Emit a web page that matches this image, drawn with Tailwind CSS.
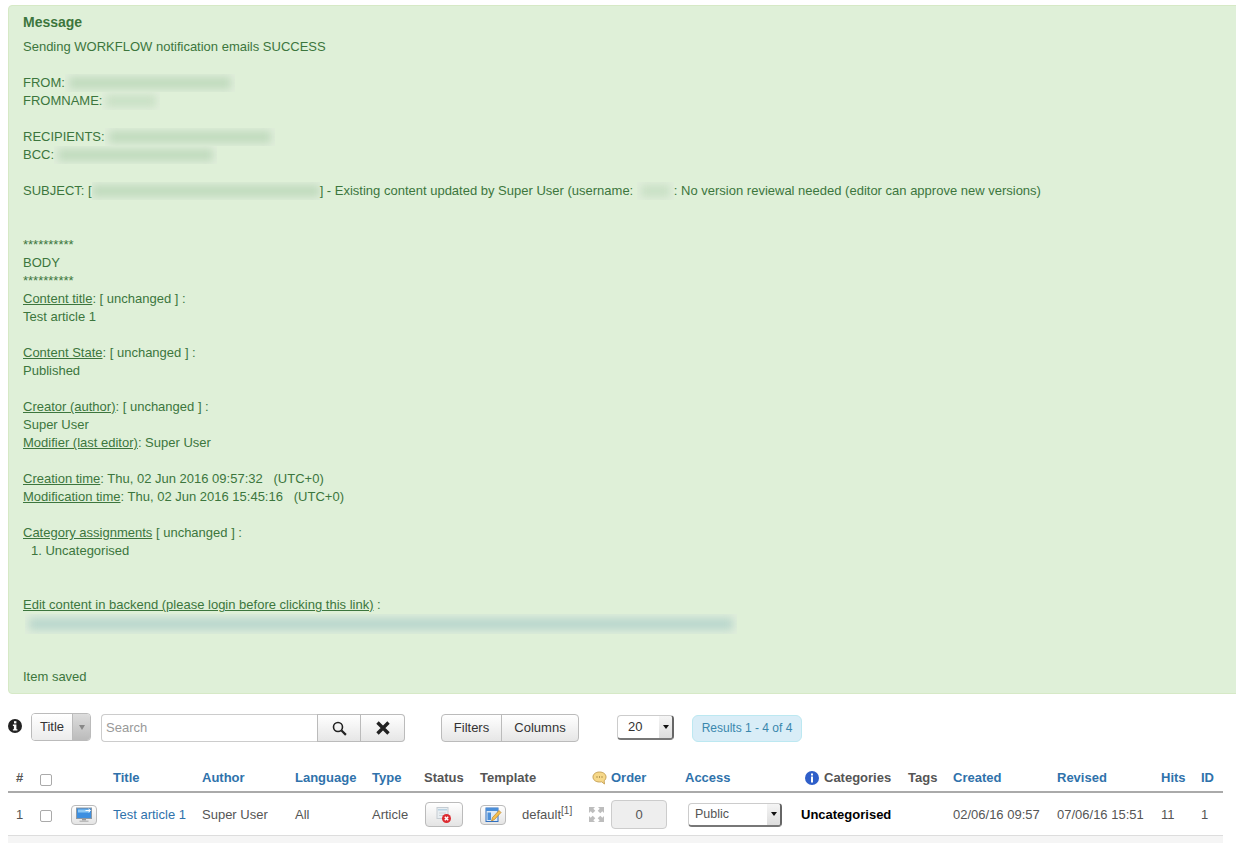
<!DOCTYPE html>
<html lang="en">
<head>
  <meta charset="UTF-8">
  <title>Content manager</title>
  <script src="https://cdn.jsdelivr.net/npm/@tailwindcss/browser@4"></script>
</head>
<body class="bg-white h-[843px] overflow-hidden font-['Liberation_Sans',Arial,sans-serif] text-[13px] leading-[18px] text-[#555]">
  <!-- Message -->
  <div class="mt-[5px] ml-2 -mr-2 h-[689px] pt-[7px] pl-[14px] bg-[#dff0d8] border border-[#d6e9c6] rounded text-[#3c763d]">
    <h4 class="font-bold text-[14px] h-[18px] mb-[7px]">Message</h4>
    <div>Sending WORKFLOW notification emails SUCCESS</div>
    <div class="h-[18px]"></div>
    <div class="flex h-[18px]">FROM:<span class="w-[170px] h-[18px] overflow-hidden bg-[#e0eedb]"><span class="block mx-1 mt-[3px] h-[12px] bg-[#bfdabc] blur-[4px]"></span></span></div>
    <div class="flex h-[18px]">FROMNAME:<span class="w-[58px] h-[18px] overflow-hidden bg-[#e0eedb]"><span class="block mx-1 mt-[3px] h-[12px] bg-[#c8e0c4] blur-[4px]"></span></span></div>
    <div class="h-[18px]"></div>
    <div class="flex h-[18px]">RECIPIENTS:<span class="w-[170px] h-[18px] overflow-hidden bg-[#e0eedb]"><span class="block mx-1 mt-[3px] h-[12px] bg-[#bfdabc] blur-[4px]"></span></span></div>
    <div class="flex h-[18px]">BCC:<span class="w-[163px] h-[18px] overflow-hidden bg-[#e0eedb]"><span class="block mx-1 mt-[3px] h-[12px] bg-[#bfdabc] blur-[4px]"></span></span></div>
    <div class="h-[18px]"></div>
    <div class="flex whitespace-pre">SUBJECT: [<span class="w-[228px] h-[18px] overflow-hidden bg-[#e0eedb]"><span class="block mx-0 mt-[3px] h-[12px] bg-[#bfdabc] blur-[4px]"></span></span>] - Existing content updated by Super User (username: <span class="w-[37px] h-[18px] overflow-hidden bg-[#e0eedb]"><span class="block mx-1 mt-[3px] h-[12px] bg-[#c8e0c4] blur-[4px]"></span></span>: No version reviewal needed (editor can approve new versions)</div>
    <div class="h-[36px]"></div>
    <div>**********</div>
    <div>BODY</div>
    <div>**********</div>
    <div><u>Content title</u>: [ unchanged ] :</div>
    <div>Test article 1</div>
    <div class="h-[18px]"></div>
    <div><u>Content State</u>: [ unchanged ] :</div>
    <div>Published</div>
    <div class="h-[18px]"></div>
    <div><u>Creator (author)</u>: [ unchanged ] :</div>
    <div>Super User</div>
    <div><u>Modifier (last editor)</u>: Super User</div>
    <div class="h-[18px]"></div>
    <div class="whitespace-pre"><u>Creation time</u>: Thu, 02 Jun 2016 09:57:32   (UTC+0)</div>
    <div class="whitespace-pre"><u>Modification time</u>: Thu, 02 Jun 2016 15:45:16   (UTC+0)</div>
    <div class="h-[18px]"></div>
    <div><u>Category assignments</u> [ unchanged ] :</div>
    <div class="pl-2">1. Uncategorised</div>
    <div class="h-[36px]"></div>
    <div><u>Edit content in backend (please login before clicking this link)</u> :</div>
    <div class="ml-[2px] w-[712px] h-[20px] overflow-hidden bg-[#e0eedb]"><span class="block mx-1 mt-[4px] h-[12px] bg-[#b8d6cc] blur-[4px]"></span></div>
    <div class="h-[34px]"></div>
    <div>Item saved</div>
  </div>

  <!-- Toolbar -->
  <div class="flex items-start mt-[19px] ml-2 text-[#333]">
    <svg class="w-[14px] h-[14px] mt-[6px] mr-[9px]" viewBox="0 0 14 14"><circle cx="7" cy="7" r="7" fill="#222"/><rect x="6" y="2.200" width="2.400" height="2.200" fill="#fff"/><path d="M4.900 5.600h3.500v4.600h1v1.300H4.900v-1.300h1V6.900h-1z" fill="#fff"/></svg>
    <div class="flex w-[60px] h-[28px] border border-[#bbb] rounded overflow-hidden">
      <span class="w-[40px] pl-2 leading-[26px] bg-gradient-to-b from-white to-[#ececec]">Title</span>
      <span class="flex-1 flex items-center justify-center border-l border-[#bbb] bg-gradient-to-b from-[#ddd] to-[#bbb]"><span class="border-x-[3px] border-t-[5px] border-x-transparent border-t-[#888]"></span></span>
    </div>
    <div class="ml-[10px] mt-[1px] w-[216px] h-[28px] pl-[4px] leading-[26px] border border-r-0 border-[#ccc] rounded-l text-[#999]">Search</div>
    <div class="mt-[1px] w-[44px] h-[28px] flex items-center justify-center border border-[#bbb] bg-gradient-to-b from-white to-[#e6e6e6]">
      <svg class="w-[15px] h-[15px]" viewBox="0 0 15 15" fill="none" stroke="#222"><circle cx="6" cy="6" r="4.500" stroke-width="1.600"/><path d="M9.500 9.500l4.400 4.400" stroke-width="2.200"/></svg>
    </div>
    <div class="mt-[1px] w-[44px] h-[28px] flex items-center justify-center border border-l-0 border-[#bbb] rounded-r bg-gradient-to-b from-white to-[#e6e6e6]">
      <svg class="w-[14px] h-[14px]" viewBox="0 0 14 14" fill="none" stroke="#222" stroke-width="3.400"><path d="M1.500 1.500l11 11M12.500 1.500l-11 11"/></svg>
    </div>
    <div class="flex ml-[36px] mt-[1px] h-[28px] border border-[#bbb] rounded bg-gradient-to-b from-white to-[#e6e6e6] leading-[26px]">
      <span class="w-[60px] text-center border-r border-[#bbb]">Filters</span>
      <span class="w-[76px] text-center">Columns</span>
    </div>
    <div class="flex ml-[38px] mt-[2px] w-[57px] h-[25px] border border-[#ccc] border-r-2 border-b-2 border-r-[#666] border-b-[#777] rounded overflow-hidden">
      <span class="w-[41px] pl-[10px] leading-[22px]">20</span>
      <span class="flex-1 flex items-center justify-center bg-gradient-to-b from-[#f5f5f5] to-[#ddd]"><span class="border-x-[3px] border-t-[4px] border-x-transparent border-t-[#111]"></span></span>
    </div>
    <div class="ml-[18px] mt-[2px] w-[110px] h-[27px] text-center text-[12px] leading-[25px] bg-[#d9edf7] border border-[#bce8f1] rounded-md text-[#3a87ad]">Results 1 - 4 of 4</div>
  </div>

  <!-- Table -->
  <table class="table-fixed ml-2 mt-[21px] w-[1215px] border-collapse">
    <colgroup>
      <col class="w-[24px]"><col class="w-[31px]"><col class="w-[42px]"><col class="w-[89px]"><col class="w-[93px]"><col class="w-[77px]"><col class="w-[52px]"><col class="w-[56px]"><col class="w-[110px]"><col class="w-[95px]"><col class="w-[116px]"><col class="w-[107px]"><col class="w-[45px]"><col class="w-[104px]"><col class="w-[104px]"><col class="w-[40px]"><col class="w-[30px]">
    </colgroup>
    <thead>
      <tr class="h-[29px] border-b-2 border-[#aaa] text-left [&>th]:px-2 [&>th]:pt-[2px] [&>th]:font-bold [&>th]:whitespace-nowrap">
        <th>#</th>
        <th><span class="block w-[12px] h-[12px] mt-[3px] border border-[#aaa] rounded-[2px] bg-white"></span></th>
        <th></th>
        <th class="text-[#2f72ab]">Title</th>
        <th class="text-[#2f72ab]">Author</th>
        <th class="text-[#2f72ab]">Language</th>
        <th class="text-[#2f72ab]">Type</th>
        <th>Status</th>
        <th>Template</th>
        <th>
          <div class="flex items-center text-[#2f72ab] pl-[2px]">
            <svg class="w-[15px] h-[14px] mr-[4px]" viewBox="0 0 15 14"><path d="M7.500 1C3.600 1 1 3.200 1 6s2.600 5 6.500 5c.8 0 1.500 0 2.200-.2L12.500 13l-.4-3.200C13.300 8.900 14 7.500 14 6c0-2.800-2.600-5-6.500-5z" fill="#f6d889" stroke="#c9a55a"/><path d="M4.500 6h1M7 6h1M9.500 6h1" stroke="#7a5a1c" stroke-width="1.200"/></svg>
            Order
          </div>
        </th>
        <th class="text-[#2f72ab]">Access</th>
        <th>
          <div class="flex items-center pl-1">
            <svg class="w-[14px] h-[14px] mr-[5px]" viewBox="0 0 14 14"><circle cx="7" cy="7" r="7" fill="#2f5fc9"/><rect x="6" y="2.500" width="2" height="2" fill="#fff"/><rect x="6" y="5.500" width="2" height="6" fill="#fff"/></svg>
            Categories
          </div>
        </th>
        <th>Tags</th>
        <th class="text-[#2f72ab]">Created</th>
        <th class="text-[#2f72ab]">Revised</th>
        <th class="text-[#2f72ab]">Hits</th>
        <th class="text-[#2f72ab]">ID</th>
      </tr>
    </thead>
    <tbody>
      <tr class="h-[43px] border-b border-[#ddd] [&>td]:px-2 [&>td]:pt-[2px] [&>td]:whitespace-nowrap">
        <td>1</td>
        <td><span class="block w-[12px] h-[12px] mt-[2px] border border-[#aaa] rounded-[2px] bg-white"></span></td>
        <td>
          <span class="flex items-center justify-center w-[26px] h-[20px] border border-[#bbb] rounded bg-gradient-to-b from-white to-[#e4e4e4]">
            <svg class="w-[18px] h-[16px]" viewBox="0 0 18 16"><rect x="1.500" y="1" width="15" height="10.500" fill="#3d8fe0" stroke="#8e99a3"/><path d="M3 2.500h12v3H3z" fill="#8cc8f5"/><path d="M10.500 3.500h4.500M13.500 2L15.500 3.500l-2 1.500" stroke="#fff" fill="none"/><rect x="7" y="11.500" width="4" height="2" fill="#999"/><rect x="4.500" y="13.500" width="9" height="1.500" fill="#bbb"/></svg>
          </span>
        </td>
        <td class="text-[#2f72ab]">Test article 1</td>
        <td>Super User</td>
        <td>All</td>
        <td>Article</td>
        <td>
          <span class="flex items-center justify-center ml-px w-[38px] h-[25px] border border-[#bbb] rounded bg-gradient-to-b from-white to-[#e4e4e4]">
            <svg class="w-[18px] h-[18px]" viewBox="0 0 18 18"><rect x="2" y="1.500" width="11" height="11" fill="#e8eef2" stroke="#c5ccd2"/><path d="M3 3h9v1.500H3z" fill="#b9d2e2"/><path d="M4 7h7M4 9.500h5" stroke="#ccd2d7"/><circle cx="11.500" cy="12.500" r="4.500" fill="#dc2a30"/><path d="M9.800 10.800l3.400 3.400M13.200 10.800l-3.400 3.400" stroke="#fff" stroke-width="1.500"/></svg>
          </span>
        </td>
        <td>
          <div class="flex items-center">
            <span class="flex items-center justify-center shrink-0 w-[26px] h-[20px] border border-[#bbb] rounded bg-gradient-to-b from-white to-[#e4e4e4]">
              <svg class="w-[18px] h-[16px]" viewBox="0 0 18 16"><rect x="2" y="1" width="12" height="13.500" fill="#dbe9f7" stroke="#2f6fc0"/><path d="M2 1h12v3H2z" fill="#4c8fd8"/><rect x="3.500" y="5.500" width="3.500" height="7.500" fill="#4c8fd8"/><path d="M7.500 14l1-3.500 6.500-7 2 2-6.500 7z" fill="#f4bf4e" stroke="#b9822a" stroke-width=".7"/></svg>
            </span>
            <span class="ml-[16px]">default<sup class="text-[10px] leading-none">[1]</sup></span>
          </div>
        </td>
        <td>
          <div class="flex items-center -ml-px">
            <svg class="w-[15px] h-[15px] shrink-0 mr-[7px]" viewBox="0 0 15 15" fill="#bdbdbd"><path d="M0 0h6L4.300 1.700 6.300 3.700 3.700 6.300 1.700 4.300 0 6zM15 0v6l-1.700-1.700-2 2-2.600-2.600 2-2L9 0zM0 15V9l1.700 1.700 2-2 2.600 2.600-2 2L6 15zM15 15H9l1.700-1.700-2-2 2.600-2.600 2 2L15 9z"/></svg>
            <span class="shrink-0 w-[56px] h-[29px] text-center leading-[27px] border border-[#ccc] rounded bg-[#eee]">0</span>
          </div>
        </td>
        <td>
          <div class="flex w-[94px] ml-[3px] h-[24px] border border-[#ccc] border-r-2 border-b-2 border-r-[#666] border-b-[#777] rounded overflow-hidden">
            <span class="w-[78px] pl-[6px] text-[12.500px] leading-[21px]">Public</span>
            <span class="flex-1 flex items-center justify-center bg-gradient-to-b from-[#f5f5f5] to-[#ddd]"><span class="border-x-[3px] border-t-[4px] border-x-transparent border-t-[#111]"></span></span>
          </div>
        </td>
        <td class="font-bold text-black">Uncategorised</td>
        <td></td>
        <td>02/06/16 09:57</td>
        <td>07/06/16 15:51</td>
        <td>11</td>
        <td>1</td>
      </tr>
    </tbody>
  </table>
  <div class="ml-2 w-[1215px] h-[10px] bg-[#f5f5f5]"></div>
</body>
</html>
